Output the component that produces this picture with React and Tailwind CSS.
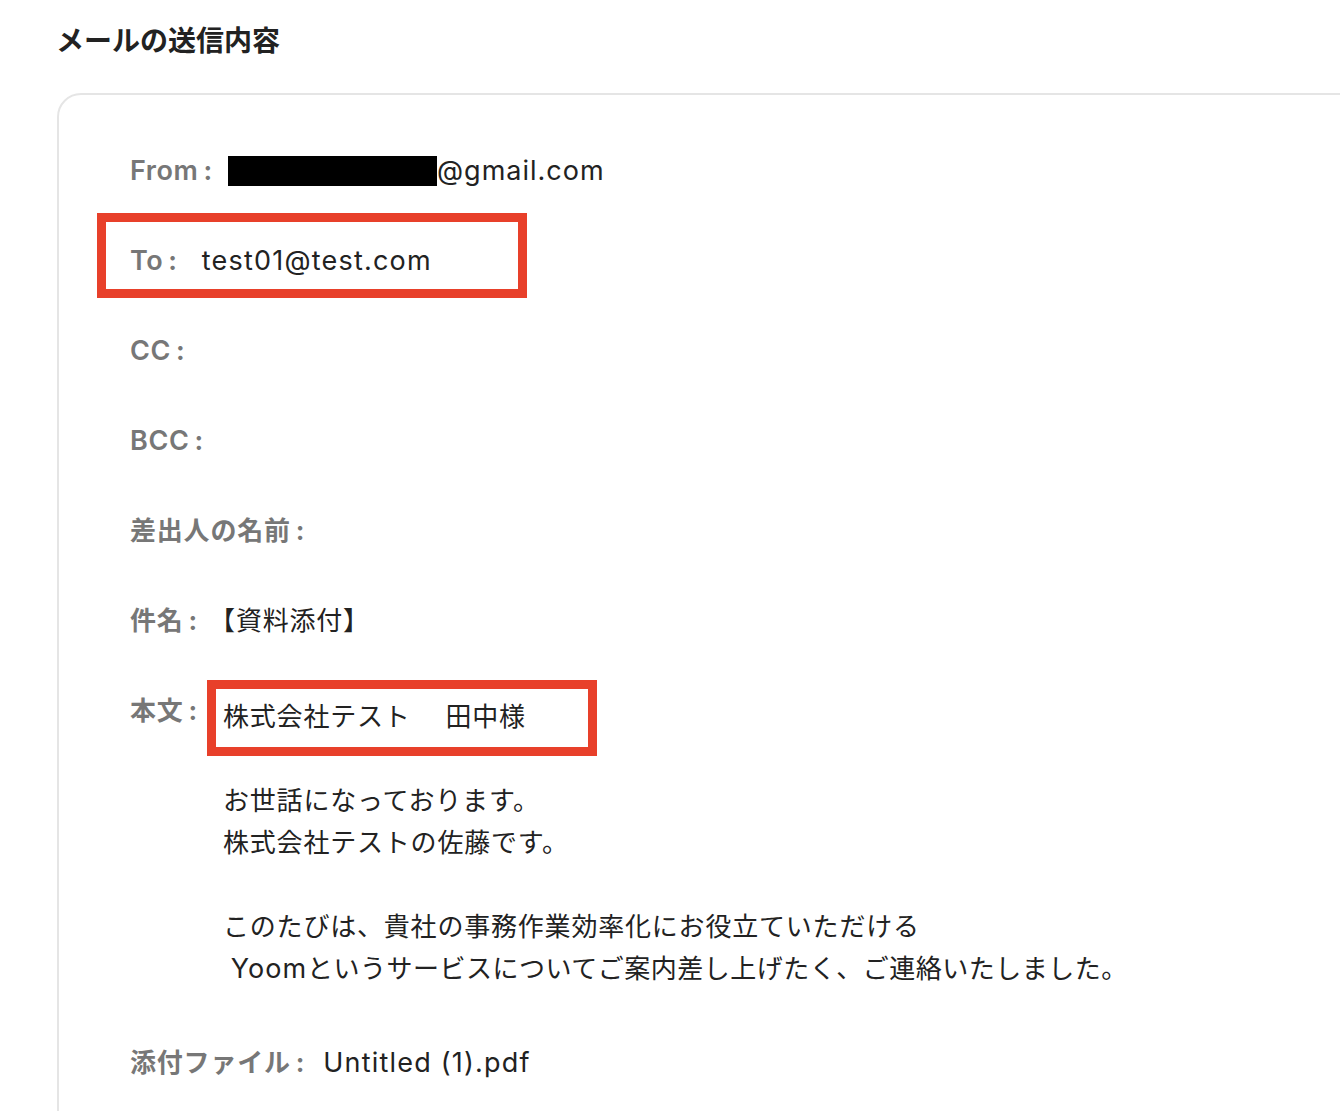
export default function App() {
  const font = { fontFamily: '"Inter", "Noto Sans CJK JP", sans-serif' };

  const bodyLines = [
    "お世話になっております。",
    "株式会社テストの佐藤です。",
    "",
    "このたびは、貴社の事務作業効率化にお役立ていただける",
  ];

  // label colon, sits close to the label text like the original
  const colon = <span className="ml-[5px] mr-[14px] font-bold">:</span>;

  return (
    <div className="h-[1111px] w-[1340px] overflow-hidden bg-white" style={font}>
      <h2 className="pl-[56px] pt-[22px] text-[28px] leading-[38px] font-bold text-[#222]">
        メールの送信内容
      </h2>

      <div className="ml-[57px] mt-[33px] w-[1320px] h-[1100px] rounded-[24px] border-2 border-[#e5e5e5] pl-[71px] pt-[55px]">
        <div className="flex flex-col gap-[48px] text-[26px] leading-[42px] tracking-[0.8px]">
          {/* From */}
          <div className="flex items-center">
            <span className="font-semibold text-[#777]">
              <span className="text-[27px] tracking-[0.6px]">From</span>
              {colon}
            </span>
            <span className="ml-[1px] inline-block h-[30px] w-[209px] bg-black" />
            <span className="text-[27px] tracking-[1px] text-[#222]">@gmail.com</span>
          </div>

          {/* To */}
          <div className="relative flex">
            <span className="font-semibold text-[#777]">
              <span className="text-[27px] tracking-[0.6px]">To</span>
              {colon}
            </span>
            <span className="ml-[10px] text-[27px] tracking-[1.2px] text-[#222]">test01@test.com</span>
            <div className="absolute left-[-33px] top-[-27px] h-[85px] w-[430px] border-[9px] border-[#e8402a]" />
          </div>

          <div className="font-semibold text-[#777]">
            <span className="text-[27px] tracking-[0.6px]">CC</span>
            {colon}
          </div>
          <div className="font-semibold text-[#777]">
            <span className="text-[27px] tracking-[0.6px]">BCC</span>
            {colon}
          </div>
          <div className="font-semibold text-[#777]">差出人の名前{colon}</div>

          <div className="flex">
            <span className="font-semibold text-[#777]">件名{colon}</span>
            <span className="ml-[-3px] text-[#222]">【資料添付】</span>
          </div>

          {/* 本文 */}
          <div className="flex">
            <span className="w-[93px] shrink-0 font-semibold text-[#777]">本文{colon}</span>
            <div className="relative mt-[6px] text-[#222]">
              <div>株式会社テスト　 田中様</div>
              <div className="h-[42px]" />
              {bodyLines.map((line, i) =>
                line ? (
                  <div key={i} className="whitespace-pre">{line}</div>
                ) : (
                  <div key={i} className="h-[42px]" />
                )
              )}
              <div className="whitespace-pre tracking-[0.5px]">
                {" "}
                <span className="text-[27px] tracking-[1px]">Yoom</span>
                というサービスについてご案内差し上げたく、ご連絡いたしました。
              </div>
              <div className="absolute left-[-16px] top-[-16px] h-[76px] w-[390px] border-[9px] border-[#e8402a]" />
            </div>
          </div>

          <div className="mt-[4px] flex">
            <span className="font-semibold text-[#777]">添付ファイル{colon}</span>
            <span className="ml-[4px] text-[27px] tracking-[1.2px] text-[#222]">Untitled (1).pdf</span>
          </div>
        </div>
      </div>
    </div>
  );
}
